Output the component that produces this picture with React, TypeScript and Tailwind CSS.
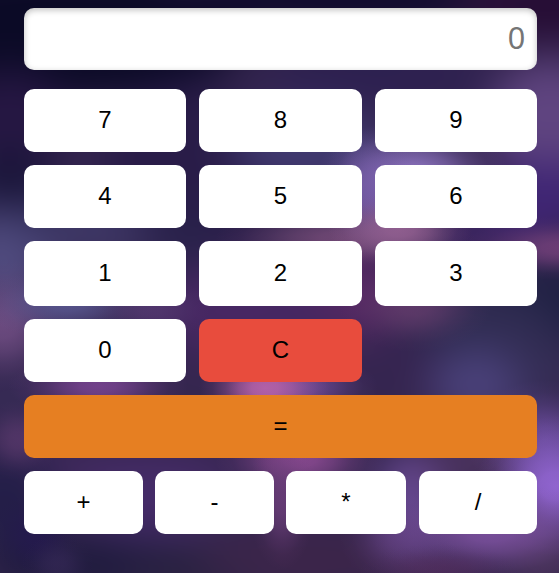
import { useState } from "react";

type Glow = [cx: number, cy: number, rx: number, ry: number, color: string, opacity: number];

// Wide colour fields that tint the backdrop
const fields: Glow[] = [
  [60, 30, 190, 70, "#0b0a26", 1],
  [330, 0, 180, 34, "#0f0a2c", 1],
  [545, 5, 90, 35, "#260c34", 1],
  [10, 120, 60, 50, "#261743", 1],
  [10, 190, 45, 40, "#191539", 1],
  [190, 170, 90, 90, "#291c48", 1],
  [310, 150, 80, 40, "#40396f", 1],
  [380, 78, 120, 22, "#2b1f51", 1],
  [550, 120, 60, 60, "#5f4480", 1],
  [5, 255, 45, 50, "#514c80", 1],
  [80, 230, 80, 25, "#403d6c", 0.9],
  [185, 240, 40, 30, "#29224b", 1],
  [545, 195, 50, 35, "#3f2575", 1],
  [490, 235, 70, 16, "#40256b", 1],
  [545, 305, 75, 42, "#1e2042", 1],
  [480, 330, 80, 40, "#302c52", 1],
  [350, 290, 50, 50, "#552863", 1],
  [240, 310, 90, 45, "#472763", 1],
  [400, 360, 40, 30, "#352450", 1],
  [480, 385, 52, 36, "#4a417a", 1],
  [545, 370, 35, 30, "#352e56", 1],
  [10, 400, 40, 40, "#362a55", 1],
  [100, 468, 160, 16, "#422a60", 1],
  [5, 500, 50, 45, "#231e48", 1],
  [150, 500, 70, 40, "#452b68", 1],
  [100, 565, 120, 26, "#1d1a3c", 1],
  [200, 572, 80, 22, "#27213e", 1],
  [310, 560, 110, 28, "#3c2549", 1],
  [410, 500, 30, 50, "#71509d", 0.9],
  [480, 460, 60, 18, "#533762", 1],
  [545, 560, 45, 30, "#483258", 1],
];

// Brighter out-of-focus lights, fading out towards the given radius
const lights: Glow[] = [
  [413, 174, 96, 54, "#8d74c0", 0.92],
  [370, 195, 50, 66, "#7a5fac", 0.85],
  [345, 238, 130, 34, "#81547f", 0.7],
  [400, 229, 72, 38, "#946192", 0.9],
  [562, 248, 100, 32, "#75417a", 0.85],
  [2, 325, 75, 66, "#775289", 0.8],
  [68, 304, 88, 36, "#5a5992", 0.85],
  [150, 309, 60, 34, "#583c75", 0.7],
  [415, 306, 76, 46, "#6c4071", 0.7],
  [98, 386, 90, 34, "#7c4694", 0.85],
  [303, 387, 75, 34, "#7951a5", 0.7],
  [265, 388, 66, 42, "#bd65ad", 0.9],
  [18, 440, 42, 40, "#5c3a6e", 0.7],
  [300, 458, 85, 46, "#8d4b93", 0.9],
  [282, 500, 34, 70, "#70407d", 0.8],
  [545, 440, 80, 60, "#7050a5", 0.8],
  [556, 486, 80, 70, "#9467d5", 0.95],
  [490, 532, 120, 50, "#7f53a2", 0.88],
  [400, 540, 60, 45, "#69458a", 0.5],
  [440, 570, 80, 26, "#572e5e", 0.6],
  [36, 535, 45, 45, "#24194e", 0.8],
  [58, 564, 36, 30, "#352856", 0.7],
];

const falloff = [
  [0, 1],
  [0.2, 0.92],
  [0.4, 0.68],
  [0.6, 0.36],
  [0.8, 0.11],
  [1, 0],
];

function Backdrop() {
  return (
    <svg
      aria-hidden="true"
      viewBox="0 0 559 573"
      preserveAspectRatio="none"
      className="absolute inset-0 h-full w-full"
    >
      <defs>
        <filter id="wide" x="-30%" y="-30%" width="160%" height="160%" colorInterpolationFilters="sRGB">
          <feGaussianBlur stdDeviation="20" />
        </filter>
        {lights.map(([, , , , color, opacity], i) => (
          <radialGradient key={i} id={`light-${i}`}>
            {falloff.map(([offset, strength]) => (
              <stop key={offset} offset={offset} stopColor={color} stopOpacity={strength * opacity} />
            ))}
          </radialGradient>
        ))}
      </defs>
      <g filter="url(#wide)">
        <rect x="-60" y="-60" width="679" height="693" fill="#35264f" />
        {fields.map(([cx, cy, rx, ry, color, opacity], i) => (
          <ellipse key={i} cx={cx} cy={cy} rx={rx} ry={ry} fill={color} opacity={opacity} />
        ))}
      </g>
      {lights.map(([cx, cy, rx, ry], i) => (
        <ellipse key={i} cx={cx} cy={cy} rx={rx} ry={ry} fill={`url(#light-${i})`} />
      ))}
    </svg>
  );
}

function Key({
  label,
  onPress,
  className = "bg-white",
}: {
  label: string;
  onPress: (label: string) => void;
  className?: string;
}) {
  return (
    <button
      type="button"
      onClick={() => onPress(label)}
      className={`flex items-center justify-center rounded-[10px] pb-[2px] text-2xl text-black ${className}`}
    >
      {label}
    </button>
  );
}

function calculate(expression: string): string {
  const tokens = expression.match(/\d+(?:\.\d+)?|[-+*/]/g) ?? [];
  const terms: number[] = [];
  let operator = "+";
  for (const token of tokens) {
    if (/^[-+*/]$/.test(token)) {
      operator = token;
      continue;
    }
    const value = Number(token);
    if (operator === "+") terms.push(value);
    else if (operator === "-") terms.push(-value);
    else if (operator === "*") terms.push((terms.pop() ?? 0) * value);
    else terms.push((terms.pop() ?? 0) / value);
  }
  return tokens.length ? String(terms.reduce((sum, n) => sum + n, 0)) : "";
}

export default function App() {
  const [value, setValue] = useState("");

  const press = (label: string) => {
    if (label === "C") setValue("");
    else if (label === "=") setValue(calculate(value));
    else setValue(value + label);
  };

  return (
    <main className="relative isolate h-[573px] w-full overflow-hidden bg-[#30234e] pt-2 pr-[22px] pl-6 font-['Liberation_Sans',Arial,sans-serif]">
      <Backdrop />
      <div className="relative flex flex-col">
        <input
          type="text"
          readOnly
          placeholder="0"
          value={value}
          aria-label="Result"
          className="h-[62px] w-full rounded-[10px] bg-white px-3 pb-px text-right text-[30.5px] text-black shadow-[inset_0_2px_6px_rgba(0,0,0,0.25)] outline-none placeholder:text-[#757575] placeholder:opacity-100"
        />
        <div className="mt-[19px] grid grid-cols-[162px_163px_162px] grid-rows-[63px_63px_65px_63px_63px] gap-[13px]">
          {["7", "8", "9", "4", "5", "6", "1", "2", "3", "0"].map((n) => (
            <Key key={n} label={n} onPress={press} />
          ))}
          <Key label="C" onPress={press} className="bg-[#e84c3d]" />
          <Key label="=" onPress={press} className="col-span-3 col-start-1 bg-[#e67f22]" />
        </div>
        <div className="mt-[13px] flex h-[63px] gap-3">
          <Key label="+" onPress={press} className="w-[119px] bg-white" />
          <Key label="-" onPress={press} className="w-[119px] bg-white" />
          <Key label="*" onPress={press} className="w-[120px] bg-white" />
          <Key label="/" onPress={press} className="ml-px w-[118px] bg-white" />
        </div>
      </div>
    </main>
  );
}
